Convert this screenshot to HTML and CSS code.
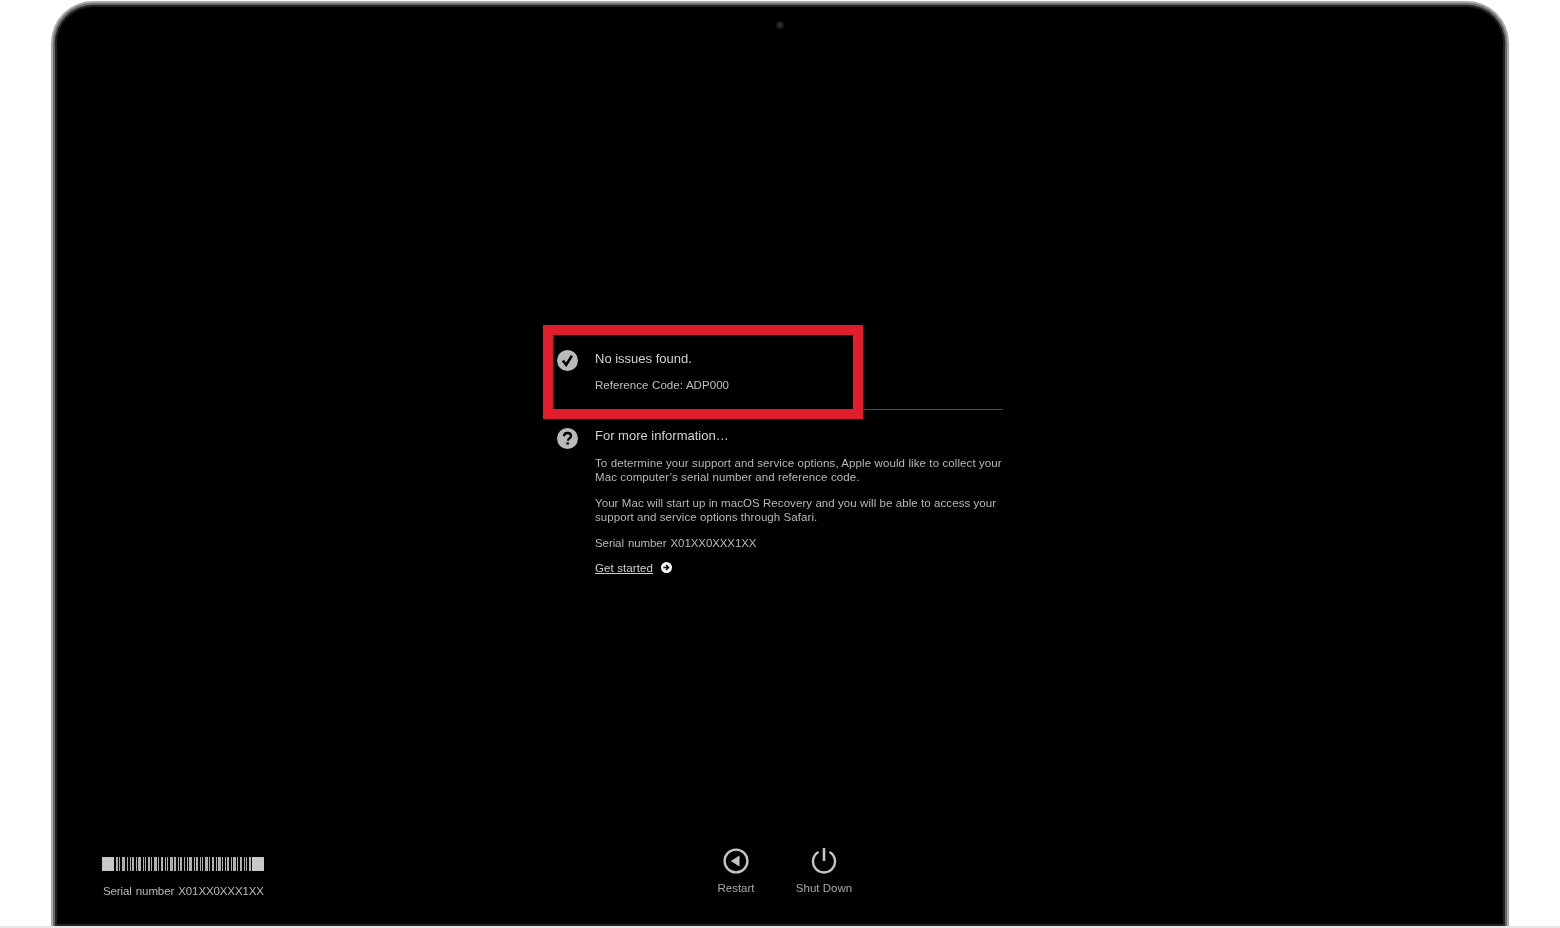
FILE: index.html
```html
<!DOCTYPE html>
<html lang="en">
<head>
<meta charset="utf-8">
<title>Apple Diagnostics</title>
<link rel="stylesheet" href="styles.css">
</head>
<body>
<div class="page">
  <div class="bezel">
    <main class="screen">
      <div class="camera"></div>
      <div class="panel">
        <section class="result">
          <svg class="status-icon" viewBox="0 0 21 21"><circle cx="10.5" cy="10.5" r="10.5" fill="#b9b9b9"/><path d="M5.8 10.6l3.4 4.2 5.7-9" fill="none" stroke="#000" stroke-width="2.6"/></svg>
          <div class="body">
            <h1 class="title">No issues found.</h1>
            <p class="code">Reference Code: ADP000</p>
          </div>
          <div class="highlight"></div>
        </section>
        <section class="more">
          <svg class="status-icon" viewBox="0 0 21 21"><circle cx="10.5" cy="10.5" r="10.5" fill="#b9b9b9"/><path d="M7 8.2c0-2 1.500-3.200 3.500-3.200s3.500 1.100 3.500 3c0 2.400-3 2.500-3 4.800" fill="none" stroke="#000" stroke-width="2.300"/><rect x="9.400" y="14.300" width="2.400" height="2.400" fill="#000"/></svg>
          <div class="body">
            <h2 class="title">For more information…</h2>
            <p class="text first">To determine your support and service options, Apple would like to collect your<br>Mac computer’s serial number and reference code.</p>
            <p class="text tight">Your Mac will start up in macOS Recovery and you will be able to access your<br>support and service options through Safari.</p>
            <p class="text serial-line">Serial number X01XX0XXX1XX</p>
            <p class="link-row"><a class="link" href="#">Get started</a>
              <svg class="arrow" viewBox="0 0 11 11"><circle cx="5.500" cy="5.500" r="5.500" fill="#fff"/><path d="M2.300 5.500h4M5 3l2.500 2.500L5 8" fill="none" stroke="#000" stroke-width="1.500"/></svg>
            </p>
          </div>
        </section>
      </div>
      <footer class="footer">
        <div class="serial">
          <svg class="barcode" viewBox="0 0 162 14" preserveAspectRatio="none">
            <rect class="bar-end" x="0" width="12" height="14"/><rect x="14" width="2" height="14"/><rect x="17" width="1" height="14"/><rect x="20" width="3" height="14"/><rect x="25" width="1" height="14"/><rect x="28" width="1" height="14"/><rect x="30" width="2" height="14"/><rect x="34" width="1" height="14"/><rect x="36" width="3" height="14"/><rect x="41" width="1" height="14"/><rect x="43" width="1" height="14"/><rect x="46" width="2" height="14"/><rect x="49" width="1" height="14"/><rect x="52" width="3" height="14"/><rect x="56" width="1" height="14"/><rect x="59" width="2" height="14"/><rect x="63" width="1" height="14"/><rect x="65" width="1" height="14"/><rect x="68" width="3" height="14"/><rect x="72" width="2" height="14"/><rect x="76" width="1" height="14"/><rect x="78" width="2" height="14"/><rect x="82" width="1" height="14"/><rect x="85" width="1" height="14"/><rect x="87" width="3" height="14"/><rect x="92" width="1" height="14"/><rect x="94" width="2" height="14"/><rect x="98" width="1" height="14"/><rect x="100" width="1" height="14"/><rect x="103" width="3" height="14"/><rect x="107" width="1" height="14"/><rect x="110" width="2" height="14"/><rect x="114" width="1" height="14"/><rect x="116" width="3" height="14"/><rect x="120" width="1" height="14"/><rect x="123" width="1" height="14"/><rect x="125" width="2" height="14"/><rect x="129" width="1" height="14"/><rect x="131" width="3" height="14"/><rect x="135" width="1" height="14"/><rect x="138" width="2" height="14"/><rect x="142" width="1" height="14"/><rect x="144" width="1" height="14"/><rect x="147" width="2" height="14"/><rect class="bar-end" x="150" width="12" height="14"/>
          </svg>
          <p class="serial-text">Serial number X01XX0XXX1XX</p>
        </div>
        <nav class="actions">
          <div class="action">
            <svg class="action-icon" viewBox="0 0 26 26"><circle cx="13" cy="13" r="11.400" fill="none" stroke="#c4c4c4" stroke-width="2.400"/><path d="M16.500 7.500v11L7.800 13z" fill="#c4c4c4"/></svg>
            <span class="action-label">Restart</span>
          </div>
          <div class="action">
            <svg class="action-icon" viewBox="0 0 26 26"><path d="M7.500 4a11 11 0 1 0 11 0" fill="none" stroke="#c4c4c4" stroke-width="2.400"/><path d="M13 0v13" stroke="#c4c4c4" stroke-width="2.600"/></svg>
            <span class="action-label">Shut Down</span>
          </div>
        </nav>
      </footer>
    </main>
  </div>
</div>
</body>
</html>
```

FILE: styles.css
```css
* { box-sizing: border-box; }
html, body { margin: 0; padding: 0; background: #fff; }
body { font-family: "Liberation Sans", Arial, sans-serif; color: #c9c9c9; }
p, h1, h2 { margin: 0; font-weight: 400; }

.page {
  width: 1560px;
  height: 928px;
  overflow: hidden;
  padding: 1px 51px 0;
  background: #fff;
  border-bottom: 2px solid #e6e6e6;
}
.bezel {
  height: 100%;
  padding: 2px 2px 0;
  background: #a9a9ab;
  border-radius: 42px 42px 0 0;
}
.screen {
  position: relative;
  display: flex;
  flex-direction: column;
  height: 100%;
  background: #000;
  border: 2px solid #6a6a6d;
  border-bottom: 0;
  border-radius: 40px 40px 0 0;
  box-shadow: inset 0 0 0 2px #222223;
}
.camera {
  position: absolute;
  left: 721px;
  top: 16px;
  width: 8px;
  height: 8px;
  border-radius: 50%;
  background: radial-gradient(circle, #2c2c2c 0 30%, #141414 60%, #000 100%);
}

.panel {
  width: 460px;
  margin: 340px 0 0 488px;
}
.result, .more {
  position: relative;
  display: flex;
  gap: 17px;
  padding-left: 14px;
}
.result {
  height: 65px;
  padding-top: 5px;
  border-bottom: 1px solid #4a4a4a;
}
.result .status-icon { margin-top: 0; }
.more { padding-top: 17px; }
.status-icon {
  flex: none;
  width: 21px;
  height: 21px;
  margin-top: 1px;
  filter: blur(0.3px);
}
.body { filter: blur(0.3px); }
.title {
  font-size: 13px;
  line-height: 18px;
  color: #d0d0d0;
}
.code {
  margin-top: 8px;
  font-size: 11.5px;
  line-height: 18px;
  letter-spacing: 0.05px;
  word-spacing: 0.3px;
  color: #c0c0c0;
}
.text {
  margin-top: 12px;
  font-size: 11.5px;
  line-height: 14px;
  letter-spacing: 0.1px;
  color: #b8b8b8;
}
.text.first { margin-top: 11px; }
.text.tight { letter-spacing: 0.07px; }
.text.serial-line { letter-spacing: -0.09px; word-spacing: 1px; }
.link-row {
  display: flex;
  align-items: center;
  gap: 8px;
  margin-top: 11px;
  font-size: 11.5px;
  line-height: 14px;
}
.link { color: #d0d0d0; letter-spacing: 0.1px; text-decoration: underline; }
.arrow { width: 11px; height: 11px; margin-top: -1px; }

.highlight {
  position: absolute;
  left: 0;
  top: -20px;
  width: 320px;
  height: 94px;
  border: 10px solid #e21d2b;
  pointer-events: none;
}

.footer {
  display: flex;
  margin-top: auto;
  padding: 0 0 28px 47px;
  align-items: flex-end;
}
.serial { width: 162px; }
.barcode { display: block; width: 162px; height: 14px; fill: #b0b0b0; filter: blur(0.6px); }
.bar-end { fill: #c8c8c8; }
.serial-text {
  margin: 13px 0 0 1px;
  font-size: 11.5px;
  line-height: 14px;
  letter-spacing: -0.11px;
  word-spacing: 1px;
  white-space: nowrap;
  color: #b8b8b8;
  filter: blur(0.3px);
}
.actions { display: flex; margin-left: 428px; padding-bottom: 3px; }
.action {
  display: flex;
  flex-direction: column;
  align-items: center;
  width: 88px;
  filter: blur(0.3px);
}
.action-icon { width: 26px; height: 26px; }
.action-label {
  margin-top: 7px;
  font-size: 11.5px;
  line-height: 14px;
  color: #a8a8a8;
}
```
